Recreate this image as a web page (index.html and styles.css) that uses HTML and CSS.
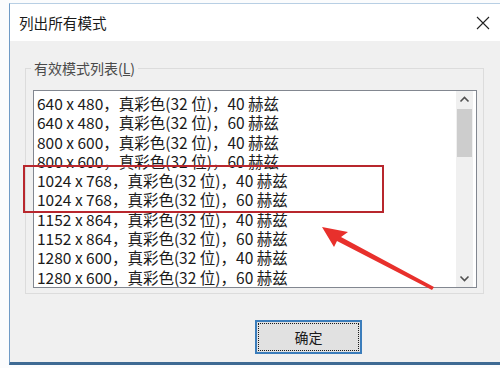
FILE: index.html
```html
<!DOCTYPE html>
<html>
<head>
<meta charset="utf-8">
<link rel="stylesheet" href="styles.css">
</head>
<body>
<div class="window">
  <div class="titlebar">
    <span class="title">列出所有模式</span>
    <svg class="close" width="14" height="14" viewBox="0 0 14 14"><path d="M1 1L13 13M13 1L1 13" stroke="#222" stroke-width="1.1" fill="none"/></svg>
  </div>
  <div class="content">
    <div class="group">
      <span class="legend">有效模式列表(<u>L</u>)</span>
      <div class="listbox">
        <div class="items">
          <div class="row">640 x 480，真彩色(32 位)，40 赫兹</div>
          <div class="row">640 x 480，真彩色(32 位)，60 赫兹</div>
          <div class="row">800 x 600，真彩色(32 位)，40 赫兹</div>
          <div class="row">800 x 600，真彩色(32 位)，60 赫兹</div>
          <div class="row">1024 x 768，真彩色(32 位)，40 赫兹</div>
          <div class="row">1024 x 768，真彩色(32 位)，60 赫兹</div>
          <div class="row">1152 x 864，真彩色(32 位)，40 赫兹</div>
          <div class="row">1152 x 864，真彩色(32 位)，60 赫兹</div>
          <div class="row">1280 x 600，真彩色(32 位)，40 赫兹</div>
          <div class="row">1280 x 600，真彩色(32 位)，60 赫兹</div>
        </div>
        <div class="scrollbar">
          <svg class="arrow" width="17" height="17" viewBox="0 0 17 17"><path d="M4.5 10.5L8.5 6.5L12.5 10.5" stroke="#505050" stroke-width="1.6" fill="none"/></svg>
          <div class="track"><div class="thumb"></div></div>
          <svg class="arrow" width="17" height="17" viewBox="0 0 17 17"><path d="M4.5 6.5L8.5 10.5L12.5 6.5" stroke="#505050" stroke-width="1.6" fill="none"/></svg>
        </div>
      </div>
    </div>
    <div class="footer">
      <button class="ok">确定</button>
    </div>
  </div>
  <div class="highlight"></div>
  <svg class="pointer" width="120" height="80" viewBox="0 0 120 80">
    <path d="M4 4 L30 9 L23 14 L116 64 L114 67 L19 18 L16 24 Z" fill="#e8302c"/>
  </svg>
</div>
</body>
</html>
```

FILE: styles.css
```css
html, body {
  margin: 0;
  padding: 0;
  background: #fbfcfd;
  width: 500px;
  height: 368px;
  overflow: hidden;
}
body {
  font-family: "Noto Sans CJK SC", "Noto Sans", sans-serif;
  color: #1a1a1a;
}
.window {
  position: relative;
  margin: 3px 0 0 9px;
  width: 495px;
  height: 362px;
  border-left: 1px solid #6f9bc6;
  border-top: 1px solid #b8cfe4;
  border-bottom: 3px solid #3e6a93;
  box-sizing: border-box;
  background: #f0f0f0;
  display: flex;
  flex-direction: column;
}
.titlebar {
  height: 37px;
  background: #ffffff;
  display: flex;
  align-items: center;
  justify-content: space-between;
  padding: 0 14px 0 9px;
  flex: none;
}
.title {
  font-size: 14.6px;
  color: #1a1a1a;
}
.close {
  display: block;
}
.content {
  flex: 1;
  padding: 27px 0 0 15px;
  display: flex;
  flex-direction: column;
}
.group {
  position: relative;
  width: 459px;
  height: 226px;
  border: 1px solid #dcdcdc;
  box-sizing: border-box;
  padding: 21px 0 0 7px;
}
.legend {
  position: absolute;
  top: -10px;
  left: 5px;
  padding: 0 3px;
  background: #f0f0f0;
  font-size: 14px;
  line-height: 18px;
  color: #4a4a4a;
}
.listbox {
  width: 444px;
  height: 198px;
  border: 1px solid #828790;
  background: #fff;
  box-sizing: border-box;
  display: flex;
}
.items {
  flex: 1;
  padding: 3px 0 0 3px;
  overflow: hidden;
}
.row {
  font-size: 15.5px;
  line-height: 19.3px;
  height: 19.3px;
  white-space: nowrap;
  color: #1a1a1a;
}
.scrollbar {
  width: 17px;
  margin-right: 3px;
  background: #f0f0f0;
  display: flex;
  flex-direction: column;
}
.arrow {
  display: block;
  flex: none;
}
.track {
  flex: 1;
}
.thumb {
  height: 48px;
  margin: 1px 1px 0;
  background: #cdcdcd;
}
.footer {
  flex: 1;
  display: flex;
  justify-content: flex-start;
  padding: 26px 0 0 230px;
}
.ok {
  width: 107px;
  height: 34px;
  border: 2px solid #3b7dbb;
  outline: 1px dotted #1a1a1a;
  outline-offset: -4px;
  background: #e1e1e1;
  font-family: "Noto Sans CJK SC", sans-serif;
  font-size: 14px;
  color: #1a1a1a;
  padding: 0;
}
.highlight {
  position: absolute;
  left: 13px;
  top: 161px;
  width: 361px;
  height: 48px;
  border: 2px solid #b8272d;
  box-sizing: border-box;
}
.pointer {
  position: absolute;
  left: 308px;
  top: 219px;
}
```
